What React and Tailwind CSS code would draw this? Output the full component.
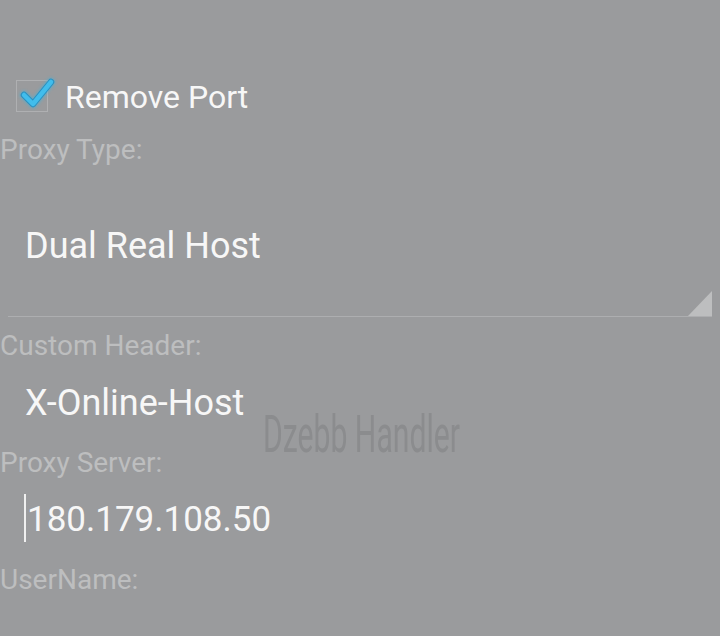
import React from "react";

const labelCls = "text-[28px] leading-[32px] text-[#bdbebf] whitespace-nowrap";
const valueCls = "text-[36px] leading-[42px] text-[#f7f7f7] whitespace-nowrap";

const CheckMark = () => (
    <svg width="44" height="34" viewBox="0 0 44 34" className="absolute -left-[1px] -top-[2px] overflow-visible">
        <defs>
            <filter id="glow" x="-50%" y="-50%" width="200%" height="200%">
                <feGaussianBlur stdDeviation="1.6" />
            </filter>
        </defs>
        <path d="M8 16 L17 25 L35 3" fill="none" stroke="#38b4e2" strokeWidth="8" strokeLinecap="round" strokeLinejoin="round" filter="url(#glow)" opacity="0.6" />
        <path d="M8 16 L17 25 L35 3" fill="none" stroke="#2a8fbf" strokeWidth="6.5" strokeLinecap="round" strokeLinejoin="round" />
        <path d="M8 16 L17 25 L35 3" fill="none" stroke="#41bdec" strokeWidth="4.5" strokeLinecap="round" strokeLinejoin="round" />
    </svg>
);

export default function App() {
    return (
        <div className="relative w-[720px] h-[636px] overflow-hidden bg-[#9a9b9d] font-['Roboto',sans-serif]">
            <div className="pt-[78px]">
                <div className="flex items-start">
                    <div className="relative ml-[16px] mt-[2px] w-[32px] h-[32px] border border-[#afb0b2]">
                        <CheckMark />
                    </div>
                    <span className="ml-[17px] mt-[1px] text-[32px] leading-[36px] text-[#f7f7f7] whitespace-nowrap">Remove Port</span>
                </div>

                <div className={`mt-[19px] ${labelCls}`}>Proxy Type:</div>

                <div className="relative mx-[8px] pt-[59px] pb-[49px] border-b-[1.5px] border-[#adaeb0]">
                    <div className={`pl-[17px] ${valueCls}`}>Dual Real Host</div>
                    <svg width="24" height="25" viewBox="0 0 24 25" className="absolute right-0 bottom-0">
                        <polygon points="24,0 24,25 0,25" fill="#bdbebf" />
                    </svg>
                </div>

                <div className={`mt-[13px] ${labelCls}`}>Custom Header:</div>
                <div className={`mt-[20px] pl-[25px] ${valueCls}`}>X-Online-Host</div>

                <div className={`mt-[23px] ${labelCls}`}>Proxy Server:</div>
                <div className="relative mt-[20px] pl-[27px] text-[35px] leading-[41px] text-[#f7f7f7] whitespace-nowrap">
                    <span className="absolute left-[24px] -top-[5px] w-[1.5px] h-[48px] bg-[#f0f0f0]" />
                    180.179.108.50
                </div>

                <div className={`mt-[24px] ${labelCls}`}>UserName:</div>
            </div>

            <div className="absolute left-[263px] top-[404px] text-[52px] leading-[61px] text-[#8b8c8e] whitespace-nowrap origin-left scale-x-[0.58]">
                Dzebb Handler
            </div>
        </div>
    );
}
